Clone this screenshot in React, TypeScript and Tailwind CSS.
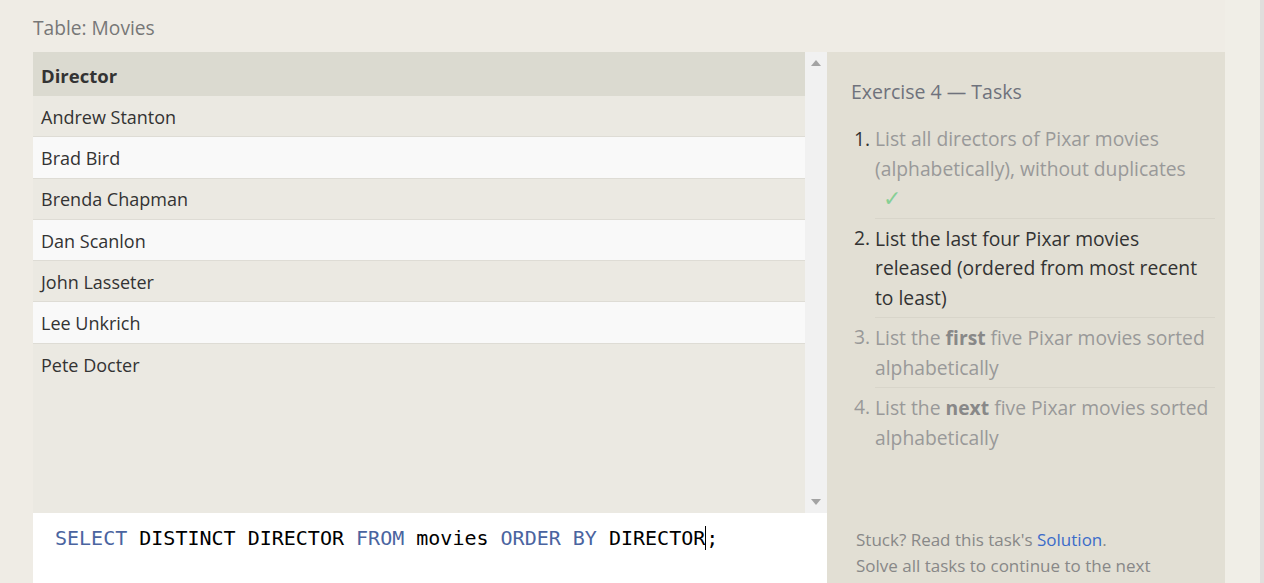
import React from "react";

const rows = [
  "Andrew Stanton",
  "Brad Bird",
  "Brenda Chapman",
  "Dan Scanlon",
  "John Lasseter",
  "Lee Unkrich",
  "Pete Docter",
];

const sans = { fontFamily: '"Open Sans", "Noto Sans", sans-serif' };

export default function App() {
  return (
    <div
      className="w-[1264px] h-[583px] overflow-hidden bg-[#efece5] flex"
      style={sans}
    >
      <div className="flex-1 pl-[33px] flex flex-col">
        <div className="h-[52px] pt-[14px] text-[19.2px] leading-[28px] text-[#777]">
          Table: Movies
        </div>
        <div className="flex flex-1">
          {/* left column: table + editor */}
          <div className="w-[794px] flex flex-col">
            <div className="flex h-[461px]">
              <div className="flex-1 bg-[#ebe9e2]">
                <div className="h-[44px] bg-[#dbdad0] px-[8px] pt-[3px] flex items-center text-[18.5px] font-bold text-[#333]">
                  Director
                </div>
                {rows.map((r, i) => (
                  <div
                    key={r}
                    className={
                      "h-[41.3px] px-[8px] pt-[2px] flex items-center text-[18px] text-[#333] " +
                      (i < rows.length - 1 ? "border-b border-[#dedcd5] " : "") +
                      (i % 2 === 1 ? "bg-[#f9f9f9]" : "bg-[#ebe9e2]")
                    }
                  >
                    {r}
                  </div>
                ))}
              </div>
              <div className="w-[22px] bg-[#f1f1f1] flex flex-col items-center justify-between py-[8px]">
                <svg width="10" height="6" viewBox="0 0 10 6">
                  <path d="M5 0 L10 6 L0 6 Z" fill="#a3a3a3" />
                </svg>
                <svg width="10" height="6" viewBox="0 0 10 6">
                  <path d="M0 0 L10 0 L5 6 Z" fill="#a3a3a3" />
                </svg>
              </div>
            </div>
            <div
              className="flex-1 bg-white pl-[22px] pt-[13px] text-[20px] leading-[24px] text-black whitespace-pre"
              style={{ fontFamily: '"DejaVu Sans Mono", "Liberation Mono", monospace' }}
            >
              <span className="text-[#4a64a0]">SELECT</span> DISTINCT DIRECTOR{" "}
              <span className="text-[#4a64a0]">FROM</span> movies{" "}
              <span className="text-[#4a64a0]">ORDER BY</span> DIRECTOR
              <span className="inline-block w-0 h-[24px] align-top border-l border-black" />;
            </div>
          </div>
          {/* right panel */}
          <div className="w-[398px] bg-[#e2dfd4] flex flex-col pl-[24px] pr-[10px] pt-[26px]">
            <div className="text-[19.5px] leading-[28px] text-[#6f727c]">
              Exercise 4 — Tasks
            </div>
            <ol className="mt-[13px] text-[19.3px] leading-[29.5px]">
              <li className="flex">
                <span className="w-[24px] shrink-0 text-right pr-[5px] py-[5px] text-[#333]">1.</span>
                <div className="flex-1 py-[5px] text-[#999]">
                  List all directors of Pixar movies (alphabetically), without duplicates
                  <div className="pl-[8px] text-[22px] text-[#86cf95]">✓</div>
                </div>
              </li>
              <li className="flex">
                <span className="w-[24px] shrink-0 text-right pr-[5px] py-[5px] text-[#333]">2.</span>
                <div className="flex-1 py-[5px] text-[#333] border-t border-[#d8d5ca]">
                  List the last four Pixar movies released (ordered from most recent to least)
                </div>
              </li>
              <li className="flex">
                <span className="w-[24px] shrink-0 text-right pr-[5px] py-[5px] text-[#999]">3.</span>
                <div className="flex-1 py-[5px] text-[#999] border-t border-[#d8d5ca]">
                  List the <b className="text-[#888]">first</b> five Pixar movies sorted alphabetically
                </div>
              </li>
              <li className="flex">
                <span className="w-[24px] shrink-0 text-right pr-[5px] py-[5px] text-[#999]">4.</span>
                <div className="flex-1 py-[5px] text-[#999] border-t border-[#d8d5ca]">
                  List the <b className="text-[#888]">next</b> five Pixar movies sorted alphabetically
                </div>
              </li>
            </ol>
            <div className="mt-auto mb-[4px] pl-[5px] text-[17px] leading-[26px] text-[#888]">
              <div>
                Stuck? Read this task's <span className="text-[#3b6bc9]">Solution</span>.
              </div>
              <div className="whitespace-nowrap">Solve all tasks to continue to the next</div>
            </div>
          </div>
        </div>
      </div>
      <div className="w-[39px] flex">
        <div className="w-[35px] bg-[#f0eee7]" />
        <div className="w-[4px] bg-[#e0dedc]" />
      </div>
    </div>
  );
}
